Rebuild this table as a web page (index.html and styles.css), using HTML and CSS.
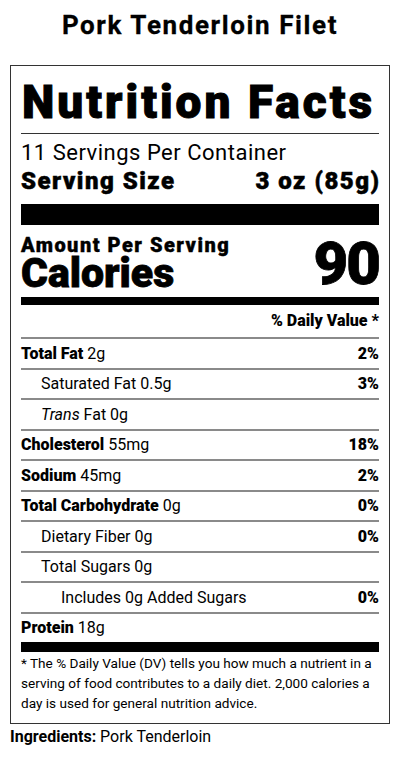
FILE: index.html
```html
<!DOCTYPE html>
<html lang="en">
<head>
    <meta charset="UTF-8">
    <title>Pork Tenderloin Filet</title>
    <meta name="viewport" content="width=device-width, initial-scale=1.0">
    <link rel="stylesheet" href="styles.css">
</head>
<body>
<h1 class="product">Pork Tenderloin Filet</h1>

<div class="label">
    <div class="label-title">Nutrition Facts</div>

    <div class="servings">11 Servings Per Container</div>
    <div class="serving-size">
        <span>Serving Size</span>
        <span>3 oz (85g)</span>
    </div>

    <div class="calories">
        <div>
            <div class="amount">Amount Per Serving</div>
            <div class="cal-label">Calories</div>
        </div>
        <div class="cal-value">90</div>
    </div>

    <div class="dv-head">% Daily Value *</div>

    <!-- Nutriments -->
    <div class="row"><span><b>Total Fat</b> 2g</span><b>2%</b></div>
    <div class="row sub"><span>Saturated Fat 0.5g</span><b>3%</b></div>
    <div class="row sub"><span><i>Trans</i> Fat 0g</span></div>
    <div class="row"><span><b>Cholesterol</b> 55mg</span><b>18%</b></div>
    <div class="row"><span><b>Sodium</b> 45mg</span><b>2%</b></div>
    <div class="row"><span><b>Total Carbohydrate</b> 0g</span><b>0%</b></div>
    <div class="row sub"><span>Dietary Fiber 0g</span><b>0%</b></div>
    <div class="row sub"><span>Total Sugars 0g</span></div>
    <div class="row subsub"><span>Includes 0g Added Sugars</span><b>0%</b></div>
    <div class="row protein"><span><b>Protein</b> 18g</span></div>

    <p class="footnote">* The % Daily Value (DV) tells you how much a nutrient in a serving of food contributes to a daily diet. 2,000 calories a day is used for general nutrition advice.</p>
</div>

<p class="ingredients"><b>Ingredients:</b> Pork Tenderloin</p>
</body>
</html>
```

FILE: styles.css
```css
body {
    margin: 0;
    font-family: Roboto, "Liberation Sans", sans-serif;
    color: #000;
    background: #fff;
}

.product {
    margin: 10px 0 24.5px;
    font-size: 26px;
    font-weight: 700;
    line-height: 30.5px;
    letter-spacing: 1.6px;
    -webkit-text-stroke: 0.3px #000;
    text-align: center;
}

.label {
    margin: 0 10px;
    border: 1px solid #333;
    padding: 0 10px 10px;
}

.label-title {
    font-size: 46px;
    font-weight: 900;
    line-height: 50px;
    letter-spacing: 3px;
    -webkit-text-stroke: 1px #000;
    padding-left: 1px;
    margin-top: 11px;
    padding-bottom: 6px;
    border-bottom: 1px solid #333;
}

.servings {
    font-size: 22px;
    line-height: 26px;
    letter-spacing: 0.5px;
    margin-top: 6px;
}

.serving-size {
    display: flex;
    justify-content: space-between;
    font-size: 24px;
    font-weight: 900;
    line-height: 31px;
    letter-spacing: 1.5px;
    -webkit-text-stroke: 0.5px #000;
    padding-bottom: 7px;
    border-bottom: 21px solid #000;
}

.serving-size span:last-child {
    margin-right: -1.5px;
}

.calories {
    display: flex;
    justify-content: space-between;
    align-items: flex-end;
    border-bottom: 8px solid #000;
    padding: 9px 0 7px;
}

.amount {
    font-size: 20px;
    font-weight: 900;
    line-height: 22px;
    letter-spacing: 1.5px;
    -webkit-text-stroke: 0.4px #000;
}

.cal-label {
    font-size: 41px;
    font-weight: 900;
    line-height: 34px;
    -webkit-text-stroke: 0.8px #000;
}

.cal-value {
    font-size: 60px;
    font-weight: 900;
    line-height: 50px;
    letter-spacing: -2px;
    -webkit-text-stroke: 0.8px #000;
    margin-bottom: 1px;
}

.dv-head {
    text-align: right;
    font-size: 16px;
    font-weight: 900;
    line-height: 32px;
}

.row {
    display: flex;
    justify-content: space-between;
    align-items: center;
    height: 28.5px;
    border-top: 2px solid #8a8a8a;
    font-size: 16px;
}

.row b {
    font-weight: 900;
}

.sub {
    padding-left: 20px;
}

.subsub {
    padding-left: 40px;
}

.protein {
    border-bottom: 10px solid #000;
}

.footnote {
    margin: 1px 0 0;
    font-size: 13.6px;
    line-height: 20px;
}

.ingredients {
    margin: 3px 10px 0;
    font-size: 16px;
}

.ingredients b {
    font-weight: 700;
}
```
